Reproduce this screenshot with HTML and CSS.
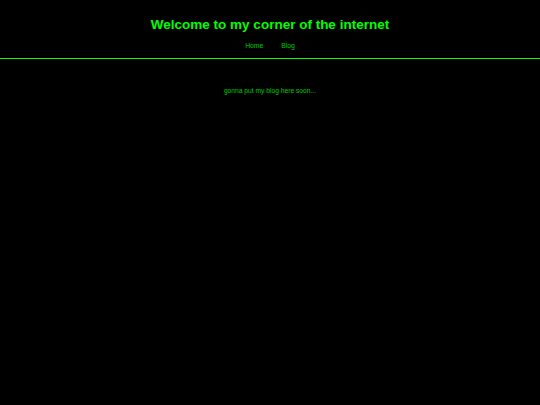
FILE: index.html
```html
<!DOCTYPE html>
<html>
<head>
<meta charset="utf-8">
<link rel="stylesheet" href="styles.css">
</head>
<body>
<header class="site-header">
<h1 class="title">Welcome to my corner of the internet</h1>
<nav class="nav">
<a class="nav-link" href="#">Home</a>
<a class="nav-link" href="#">Blog</a>
</nav>
</header>
<main class="content">
<p class="note">gonna put my blog here soon...</p>
</main>
</body>
</html>
```
FILE: styles.css
```css
html, body {
  margin: 0;
  padding: 0;
  background: #000;
  height: 100%;
}
body {
  font-family: "Liberation Sans", Arial, sans-serif;
  color: #00ff00;
}
.site-header {
  text-align: center;
  padding-top: 17px;
  padding-bottom: 9px;
  border-bottom: 1px solid #00ff00;
}
.title {
  margin: 0;
  font-size: 13.5px;
  font-weight: bold;
  color: #00ff00;
}
.nav {
  display: flex;
  justify-content: center;
  gap: 18px;
  margin-top: 10px;
}
.nav-link {
  font-size: 6.8px;
  color: #00cc00;
  text-decoration: none;
}
.content {
  text-align: center;
  padding-top: 28px;
}
.note {
  margin: 0;
  font-size: 6.7px;
  color: #00cc00;
}
```
